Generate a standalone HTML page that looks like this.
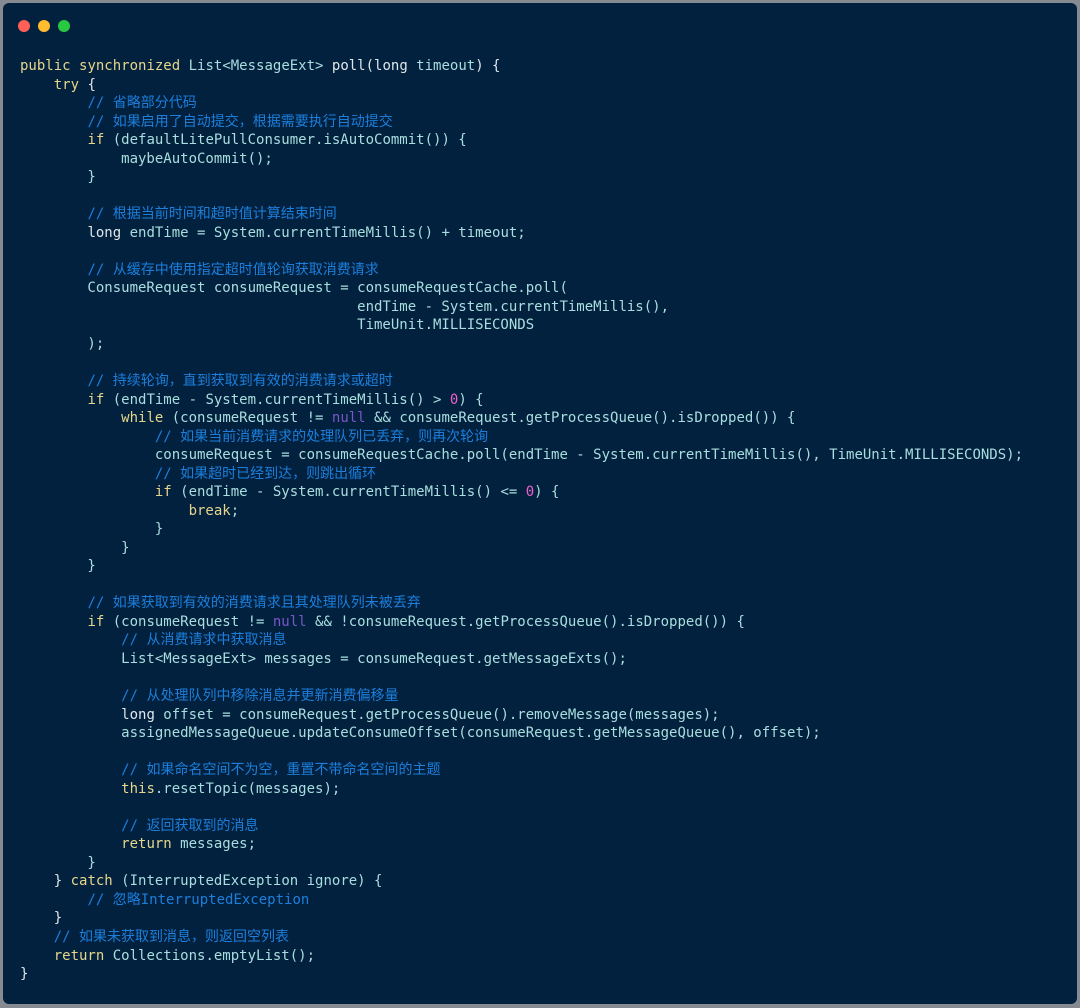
<!DOCTYPE html>
<html><head><meta charset="utf-8"><style>
html,body{margin:0;padding:0;background:#858b91;width:1080px;height:1008px;overflow:hidden}
.win{position:absolute;left:3px;top:3px;width:1074px;height:1001px;background:#02213f;border-radius:6px}
.dot{position:absolute;top:17px;width:12px;height:12px;border-radius:50%}
pre{position:absolute;left:17px;top:54px;margin:0;font-family:"DejaVu Sans Mono","Liberation Mono","Noto Sans CJK SC",monospace;font-size:14px;line-height:18.53px;color:#a9dede;white-space:pre}
.k{color:#e6d68c}.c{color:#1c7fdc;font-family:"DejaVu Sans Mono","Noto Sans CJK SC",monospace}.n{color:#7a56c8}.d{color:#f060c8}.w{color:#dfe8ea}
</style></head><body>
<div class="win">
<div class="dot" style="left:15px;background:#fe5f57"></div>
<div class="dot" style="left:35px;background:#febc2e"></div>
<div class="dot" style="left:55px;background:#28c840"></div>
<pre><span class="k">public</span> <span class="k">synchronized</span> List&lt;MessageExt&gt; <span class="w">poll(long</span> timeout<span class="w">) {</span>
    <span class="k">try</span> <span class="w">{</span>
        <span class="c">// 省略部分代码</span>
        <span class="c">// 如果启用了自动提交，根据需要执行自动提交</span>
        <span class="k">if</span> (defaultLitePullConsumer.isAutoCommit()) {
            maybeAutoCommit();
        }

        <span class="c">// 根据当前时间和超时值计算结束时间</span>
        <span class="w">long</span> endTime = System.currentTimeMillis() + timeout;

        <span class="c">// 从缓存中使用指定超时值轮询获取消费请求</span>
        ConsumeRequest consumeRequest = consumeRequestCache.poll(
                                        endTime - System.currentTimeMillis(),
                                        TimeUnit.MILLISECONDS
        );

        <span class="c">// 持续轮询，直到获取到有效的消费请求或超时</span>
        <span class="k">if</span> (endTime - System.currentTimeMillis() &gt; <span class="d">0</span>) {
            <span class="k">while</span> (consumeRequest != <span class="n">null</span> &amp;&amp; consumeRequest.getProcessQueue().isDropped()) {
                <span class="c">// 如果当前消费请求的处理队列已丢弃，则再次轮询</span>
                consumeRequest = consumeRequestCache.poll(endTime - System.currentTimeMillis(), TimeUnit.MILLISECONDS);
                <span class="c">// 如果超时已经到达，则跳出循环</span>
                <span class="k">if</span> (endTime - System.currentTimeMillis() &lt;= <span class="d">0</span>) {
                    <span class="k">break</span>;
                }
            }
        }

        <span class="c">// 如果获取到有效的消费请求且其处理队列未被丢弃</span>
        <span class="k">if</span> (consumeRequest != <span class="n">null</span> &amp;&amp; !consumeRequest.getProcessQueue().isDropped()) {
            <span class="c">// 从消费请求中获取消息</span>
            List&lt;MessageExt&gt; messages = consumeRequest.getMessageExts();

            <span class="c">// 从处理队列中移除消息并更新消费偏移量</span>
            <span class="w">long</span> offset = consumeRequest.getProcessQueue().removeMessage(messages);
            assignedMessageQueue.updateConsumeOffset(consumeRequest.getMessageQueue(), offset);

            <span class="c">// 如果命名空间不为空，重置不带命名空间的主题</span>
            <span class="k">this</span>.resetTopic(messages);

            <span class="c">// 返回获取到的消息</span>
            <span class="k">return</span> messages;
        }
    <span class="w">}</span> <span class="k">catch</span> (InterruptedException ignore) {
        <span class="c">// 忽略InterruptedException</span>
    <span class="w">}</span>
    <span class="c">// 如果未获取到消息，则返回空列表</span>
    <span class="k">return</span> Collections.emptyList();
<span class="w">}</span></pre>
</div>
</body></html>
